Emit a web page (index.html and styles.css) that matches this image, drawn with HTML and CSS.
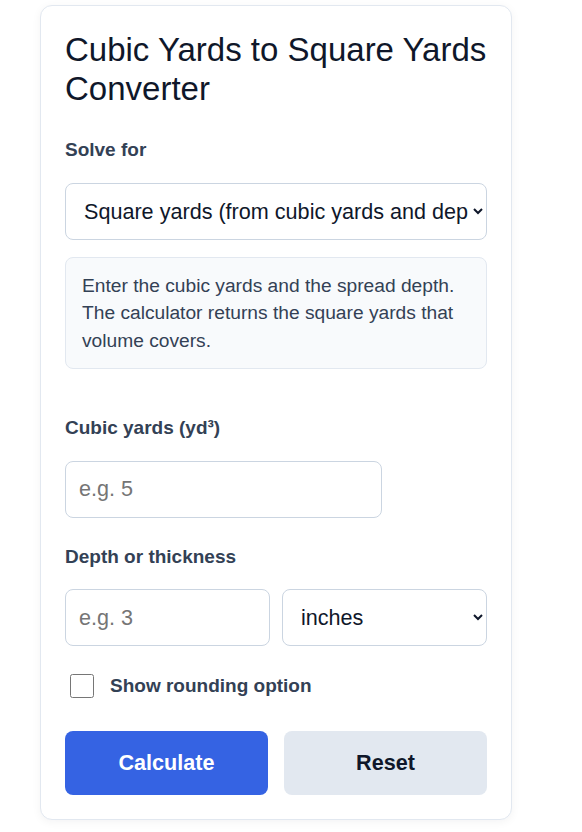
FILE: index.html
```html
<!DOCTYPE html>
<html lang="en">
<head>
<meta charset="utf-8">
<title>Cubic Yards to Square Yards Converter</title>
<link rel="stylesheet" href="styles.css">
</head>
<body>
<main class="card">
  <h1 class="title">Cubic Yards to Square Yards Converter</h1>

  <label class="label" for="mode">Solve for</label>
  <select id="mode" class="select select-wide">
    <option>Square yards (from cubic yards and depth)</option>
    <option>Cubic yards (from square yards and depth)</option>
    <option>Depth (from cubic yards and square yards)</option>
  </select>

  <div class="hint">Enter the cubic yards and the spread depth. The calculator returns the square yards that volume covers.</div>

  <label class="label label-gap" for="cy">Cubic yards (yd³)</label>
  <input id="cy" class="input input-narrow" type="text" placeholder="e.g. 5">

  <label class="label label-next" for="depth">Depth or thickness</label>
  <div class="pair">
    <input id="depth" class="input" type="text" placeholder="e.g. 3">
    <select class="select" aria-label="Depth unit">
      <option>inches</option>
      <option>feet</option>
      <option>yards</option>
      <option>centimeters</option>
      <option>meters</option>
    </select>
  </div>

  <label class="check">
    <input type="checkbox" class="check-box">
    <span>Show rounding option</span>
  </label>

  <div class="actions">
    <button class="btn btn-primary" type="button">Calculate</button>
    <button class="btn btn-muted" type="reset">Reset</button>
  </div>
</main>
</body>
</html>
```

FILE: styles.css
```css
* {
  box-sizing: border-box;
}

body {
  margin: 0;
  padding: 5px 0 12px 40px;
  background: #ffffff;
  font-family: "Liberation Sans", Arial, sans-serif;
  color: #0f172a;
}

.card {
  width: 472px;
  padding: 25px 24px 24px;
  border: 1px solid #e2e8f0;
  border-radius: 12px;
  background: #ffffff;
  box-shadow: 0 2px 10px rgba(15, 23, 42, 0.05);
  display: flex;
  flex-direction: column;
}

.title {
  margin: 0 0 30px;
  font-size: 33px;
  line-height: 38.5px;
  font-weight: 400;
  color: #0f172a;
}

.label {
  display: block;
  font-size: 19px;
  line-height: 24px;
  font-weight: 700;
  color: #334155;
  margin-bottom: 20.5px;
}

.label-gap {
  margin-top: 47px;
}

.label-next {
  margin-top: 27px;
}

.select,
.input {
  height: 57px;
  width: 100%;
  border: 1px solid #cbd5e1;
  border-radius: 8px;
  background: #ffffff;
  font-family: "Liberation Sans", Arial, sans-serif;
  font-size: 21.6px;
  color: #0f172a;
  margin: 0;
}

.select {
  padding: 0 2px 0 14px;
}

.input {
  padding: 0 13px;
}

.input::placeholder {
  color: #757575;
}

.input-narrow {
  width: 75%;
}

.hint {
  margin-top: 17px;
  padding: 14px 16px;
  border: 1px solid #e2e8f0;
  border-radius: 8px;
  background: #f8fafc;
  font-size: 19.2px;
  line-height: 27.5px;
  color: #334155;
}

.pair {
  display: grid;
  grid-template-columns: 1fr 1fr;
  gap: 12px;
}

.check {
  display: flex;
  align-items: center;
  gap: 16px;
  margin-top: 27.5px;
  font-size: 19px;
  line-height: 24px;
  font-weight: 700;
  color: #334155;
}

.check-box {
  width: 24px;
  height: 24px;
  margin: 0 0 0 5px;
}

.actions {
  display: grid;
  grid-template-columns: 1fr 1fr;
  gap: 16px;
  margin-top: 33.5px;
}

.btn {
  height: 64px;
  border: 0;
  border-radius: 8px;
  font-family: "Liberation Sans", Arial, sans-serif;
  font-size: 21.6px;
  font-weight: 700;
  cursor: pointer;
}

.btn-primary {
  background: #3563e3;
  color: #ffffff;
}

.btn-muted {
  background: #e2e8f0;
  color: #0f172a;
}
```
